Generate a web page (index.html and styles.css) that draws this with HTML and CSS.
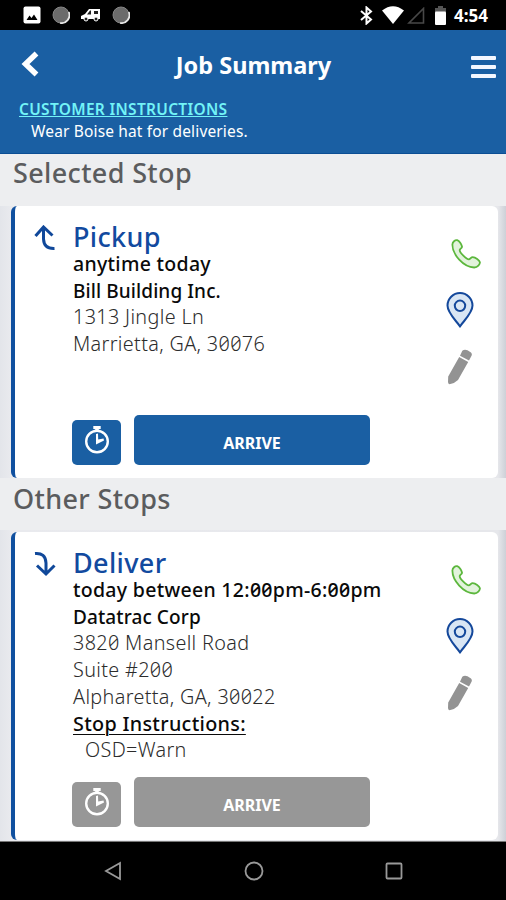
FILE: index.html
```
<!DOCTYPE html>
<html lang="en">
<head>
<meta charset="utf-8">
<meta name="viewport" content="width=device-width, initial-scale=1">
<title>Job Summary</title>
<link rel="stylesheet" href="styles.css">
</head>
<body>
    <!-- shared icons -->
    <svg class="defs" width="0" height="0">
        <symbol id="phone" viewBox="0 0 30 30">
            <path d="M1.4 5.5C1.5 3 4 .8 6.200 1.200C8.400 1.800 10.500 5.500 11 7.500C11.300 9 9.100 9.400 8.700 11C8.500 13.500 15.500 20.500 18 20.300C19.600 20.100 20 18 21.700 18.100C24.400 18.300 28.500 21.200 28.900 23.200C29.200 25.500 26.500 28.200 23.200 28.500C12.500 28.200 1.200 15.500 1.400 5.500Z"/>
        </symbol>
        <symbol id="pin" viewBox="0 0 28 36">
            <path d="M14 34.300C9.500 28 1.500 21 1.500 13.600A12.500 12.500 0 0 1 26.500 13.600C26.500 21 18.500 28 14 34.300Z"/>
            <circle cx="14" cy="13.800" r="5.200"/>
        </symbol>
        <symbol id="pencil" viewBox="0 0 26 36">
            <path d="M15.300 1.800Q17.500-.2 20.500 1.300L24 3.500Q25.500 5 24.400 7L22 11.500L13 6.700ZM12.200 8.100L21.200 12.900L11 31Q7.500 34.500 2.500 35.300Q1 35 1 33L1.200 27.500Z"/>
        </symbol>
        <symbol id="timer" viewBox="0 0 26 28">
            <path d="M9.300 0H16.700V3H14.800V5H11.200V3H9.300Z" fill="#fff"/>
            <circle cx="13" cy="15.500" r="10.800" fill="none" stroke="#fff" stroke-width="2.400"/>
            <path d="M12 8L14 7.600L14.200 13.500L19.500 12.500L20 14.500L12 18.500Z" fill="#fff"/>
        </symbol>
    </svg>

    <div class="statusbar">
        <div class="notices">
            <svg width="18" height="18" viewBox="0 0 18 18"><rect x=".5" y=".5" width="17" height="17" rx="2" fill="#fff"/><path d="M3.500 14L6.500 9.500L8.500 12L11 8.500L14.500 14Z" fill="#000"/></svg>
            <svg width="18" height="18" viewBox="0 0 18 18"><circle cx="9" cy="9" r="8" fill="#6b6b6b" stroke="#858585"/><path d="M16.800 6A8 8 0 0 1 8 17" fill="none" stroke="#e8e8e8" stroke-width="1.700"/></svg>
            <svg width="20" height="14" viewBox="0 0 20 14"><path d="M0 8L4 6L8 1H19V11H0Z" fill="#fff"/><path d="M6 6.500L9 2.500H10V6.500ZM13 3H17V6H13Z" fill="#222"/><circle cx="5" cy="11" r="2" fill="#222" stroke="#fff"/><circle cx="15" cy="11" r="2" fill="#222" stroke="#fff"/></svg>
            <svg width="18" height="18" viewBox="0 0 18 18"><circle cx="9" cy="9" r="8" fill="#6b6b6b" stroke="#858585"/><path d="M16.800 6A8 8 0 0 1 8 17" fill="none" stroke="#e8e8e8" stroke-width="1.700"/></svg>
        </div>
        <div class="system">
            <svg width="13" height="19" viewBox="0 0 13 19"><path d="M1 5L11 13.500L6.500 17.500V1.500L11 5.500L1 14" fill="none" stroke="#fff" stroke-width="2"/></svg>
            <svg width="22" height="18" viewBox="0 0 22 18"><path d="M0 4.500Q11-4 22 4.500L11 18Z" fill="#fff"/></svg>
            <svg width="18" height="17" viewBox="0 0 18 17"><path d="M2 16H16.500V1.500Z" fill="none" stroke="#484848" stroke-width="1.600"/></svg>
            <svg width="11" height="19" viewBox="0 0 11 19"><path d="M0 2H3V0H8V2H11V6H0Z" fill="#555"/><rect y="5.500" width="11" height="13.500" rx="1" fill="#fff"/></svg>
            <span class="time">4:54</span>
        </div>
    </div>

    <div class="header">
        <div class="titlebar">
            <svg class="back" width="18" height="26" viewBox="0 0 18 26"><path d="M15.500 2.500L4.500 13L15.500 23.500" fill="none" stroke="#fff" stroke-width="5.500"/></svg>
            <h1>Job Summary</h1>
            <div class="menu"><i></i><i></i><i></i></div>
        </div>
        <a class="customer">CUSTOMER INSTRUCTIONS</a>
        <p class="note">Wear Boise hat for deliveries.</p>
    </div>

    <div class="content">
        <h2>Selected Stop</h2>
        <div class="card pickup">
            <svg class="dir" width="22" height="26" viewBox="0 0 22 26"><path d="M1.500 11L9.500 2L18.500 10.500M9.500 2.500V14Q10 24 20.500 23.500" fill="none" stroke="#10489a" stroke-width="3"/></svg>
            <div class="info">
                <h3>Pickup</h3>
                <p class="strong when">anytime today</p>
                <p class="strong name">Bill Building Inc.</p>
                <p class="street">1313 Jingle Ln</p>
                <p class="city">Marrietta, GA, 30076</p>
                <div class="buttons">
                    <button class="btn timer"><svg width="26" height="28"><use href="#timer"/></svg></button>
                    <button class="btn arrive">ARRIVE</button>
                </div>
            </div>
            <div class="actions">
                <svg class="phone" width="30" height="30"><use href="#phone"/></svg>
                <svg class="pin" width="28" height="36"><use href="#pin"/></svg>
                <svg class="pencil" width="26" height="36"><use href="#pencil"/></svg>
            </div>
        </div>

        <h2 class="other">Other Stops</h2>
        <div class="card deliver">
            <svg class="dir" width="22" height="26" viewBox="0 0 22 26"><path d="M1 2.500Q11.500 1.500 12 12V23M3 14.500L12 23L20.500 14.500" fill="none" stroke="#10489a" stroke-width="3"/></svg>
            <div class="info">
                <h3>Deliver</h3>
                <p class="strong when">today between 12:00pm-6:00pm</p>
                <p class="strong name">Datatrac Corp</p>
                <p class="street">3820 Mansell Road</p>
                <p class="suite">Suite #200</p>
                <p class="city">Alpharetta, GA, 30022</p>
                <p class="strong"><u>Stop Instructions:</u></p>
                <p class="indent">OSD=Warn</p>
                <div class="buttons">
                    <button class="btn timer disabled"><svg width="26" height="28"><use href="#timer"/></svg></button>
                    <button class="btn arrive disabled">ARRIVE</button>
                </div>
            </div>
            <div class="actions">
                <svg class="phone" width="30" height="30"><use href="#phone"/></svg>
                <svg class="pin" width="28" height="36"><use href="#pin"/></svg>
                <svg class="pencil" width="26" height="36"><use href="#pencil"/></svg>
            </div>
        </div>
    </div>

    <div class="navbar">
        <svg width="18" height="20" viewBox="0 0 18 20"><path d="M16 2V18L2 10Z" fill="none" stroke="#999" stroke-width="1.800"/></svg>
        <svg width="20" height="20" viewBox="0 0 20 20"><circle cx="10" cy="10" r="8.500" fill="none" stroke="#999" stroke-width="1.800"/></svg>
        <svg width="18" height="18" viewBox="0 0 18 18"><rect x="1.500" y="1.500" width="15" height="15" rx="1" fill="none" stroke="#999" stroke-width="1.800"/></svg>
    </div>
</body>
</html>
```
FILE: styles.css
```
* {
  box-sizing: border-box;
  margin: 0;
  padding: 0;
}

body {
  width: 506px;
  height: 900px;
  display: flex;
  flex-direction: column;
  overflow: hidden;
  background-color: #000;
  font-family: "Noto Sans", sans-serif;
  font-feature-settings: "zero";
}

svg {
  display: block;
  flex: none;
}

.defs {
  position: absolute;
}

/* android status bar */
.statusbar {
  height: 30px;
  flex: none;
  display: flex;
  justify-content: space-between;
  align-items: center;
  padding: 0 18px 0 23px;
}

.notices {
  display: flex;
  align-items: center;
  gap: 11px;
}

.system {
  display: flex;
  align-items: center;
  gap: 6px;
}

.system svg:nth-child(2) {
  margin-left: 3px;
}

.system svg:nth-child(3) {
  margin-left: -3px;
}

.system svg:nth-child(4) {
  margin-left: 4px;
}

.time {
  color: #fff;
  font-size: 17px;
  font-weight: 700;
  line-height: 30px;
  margin-left: 2px;
  padding-top: 1px;
}

/* blue header */
.header {
  height: 124px;
  flex: none;
  background-color: #1a5fa3;
  border-bottom: 1px solid #0b4e94;
  color: #fff;
}

.titlebar {
  height: 70px;
  display: flex;
  justify-content: space-between;
  align-items: center;
  padding: 0 10px 0 21px;
}

h1 {
  font-size: 23.500px;
  font-weight: 700;
  line-height: 32px;
  margin-left: -3px;
}

.back {
  margin-top: -3px;
}

.menu {
  width: 25px;
  margin-top: 4px;
  display: flex;
  flex-direction: column;
  gap: 5px;
}

.menu i {
  height: 4px;
  border-radius: 1px;
  background-color: #f4f7ff;
}

.customer {
  display: block;
  margin: -1px 0 0 19px;
  color: #72f3f7;
  font-size: 15.500px;
  font-weight: 600;
  letter-spacing: .3px;
  line-height: 20px;
  text-decoration: underline;
}

.note {
  margin: 1px 0 0 31px;
  font-size: 15.500px;
  letter-spacing: .15px;
  line-height: 22px;
}

/* stops */
.content {
  height: 687px;
  flex: none;
  background: linear-gradient(to right, #e3e5ea, #e9eaee 11px, #e6e7eb 498px, #cdd0d7);
}

h2 {
  height: 52px;
  padding-left: 13px;
  background-color: #edeef0;
  color: #5b5c5e;
  font-size: 27px;
  font-weight: 500;
  letter-spacing: .35px;
  line-height: 38px;
}

.other {
  line-height: 42px;
  margin-bottom: 2px;
}

.card {
  margin: 0 8px 0 11px;
  display: flex;
  background-color: #fff;
  border-left: 4px solid #10509f;
  border-radius: 6px;
  color: #000;
}

.pickup {
  height: 272px;
}

.deliver {
  height: 308px;
}

.dir {
  margin: 19px 0 0 19px;
}

.info {
  width: 340px;
  margin-left: 16px;
  padding: 17px 0 13px;
  display: flex;
  flex-direction: column;
  white-space: nowrap;
}

h3 {
  padding-left: 1px;
  color: #124a9f;
  font-size: 27px;
  font-weight: 500;
  letter-spacing: .35px;
  line-height: 28px;
}

.info p {
  padding-left: 1px;
  color: #2c2c2c;
  font-size: 19.800px;
  font-weight: 300;
  letter-spacing: .35px;
  line-height: 26.700px;
}

.info .strong {
  color: #0a0a0a;
  font-weight: 500;
  letter-spacing: .3px;
}

.info .when {
  font-size: 19.500px;
}

.info .name {
  font-size: 19px;
  letter-spacing: .1px;
}

.info .indent {
  padding-left: 13px;
}

u {
  text-underline-offset: 3px;
  text-decoration-thickness: 1px;
}

.buttons {
  margin-top: auto;
  display: flex;
  align-items: flex-end;
  gap: 13px;
}

.btn {
  border: none;
  border-radius: 5px;
  background-color: #1a5fa3;
  color: #fff;
  font-family: inherit;
  font-size: 16px;
  font-weight: 700;
}

.timer {
  width: 49px;
  height: 45px;
  padding: 0 0 5px 12px;
}

.arrive {
  width: 236px;
  height: 50px;
  padding-top: 5px;
}

.disabled {
  background-color: #979797;
}

.actions {
  margin: 33px 0 0 34px;
}

.phone {
  margin-left: 5px;
  fill: #e2f3dc;
  stroke: #5cb73d;
  stroke-width: 1.800;
}

.pin {
  margin-top: 23px;
  fill: #d9e6f4;
  stroke: #14489b;
  stroke-width: 2;
}

.pin circle {
  fill: #fff;
}

.pencil {
  margin: 21px 0 0 1px;
  fill: #939393;
}

/* android buttons */
.navbar {
  height: 59px;
  flex: none;
  display: flex;
  align-items: center;
  padding-left: 104px;
  gap: 121.500px;
  border-top: 1px solid #777;
}
```
